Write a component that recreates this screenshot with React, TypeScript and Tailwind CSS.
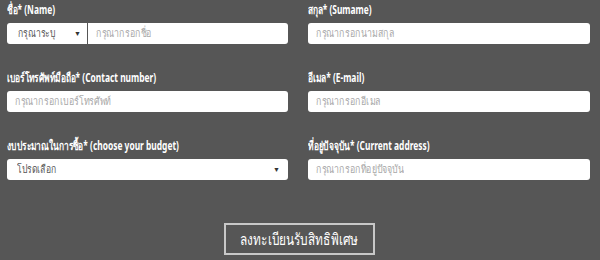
import React from 'react';

const Field = ({ label, children }: { label: string; children: React.ReactNode }) => (
  <div className="flex flex-col">
    <label className="text-[12px] font-bold text-white leading-[16px] mb-[5px] whitespace-nowrap">
      <span className="inline-block origin-left scale-x-[0.7]">{label}</span>
    </label>
    {children}
  </div>
);

const Squeeze = ({ children, scale = 'scale-x-[0.8]' }: { children: React.ReactNode; scale?: string }) => (
  <span className={`inline-block whitespace-nowrap origin-left ${scale}`}>{children}</span>
);

const TextBox = ({ placeholder, className = '' }: { placeholder: string; className?: string }) => (
  <div className={`h-[21px] bg-white flex items-center pl-[8px] text-[11px] text-[#a8a8a8] overflow-hidden ${className}`}>
    <Squeeze>{placeholder}</Squeeze>
  </div>
);

const Caret = () => <span className="text-[7px] text-[#333] leading-none">▼</span>;

const App = () => {
  return (
    <div
      className="w-[600px] h-[260px] bg-[#565656] overflow-hidden"
      style={{ fontFamily: '"Noto Sans", "Liberation Sans", sans-serif' }}
    >
      <div className="grid grid-cols-[281px_282px] gap-x-[20px] gap-y-[26px] pl-[7px] pt-[2px]">
        {/* Name */}
        <Field label="ชื่อ* (Name)">
          <div className="flex gap-[1px]">
            <div className="w-[80px] h-[21px] bg-white rounded-l-[3px] flex items-center justify-between pl-[11px] pr-[6px] text-[11px] text-[#555]">
              <Squeeze scale="scale-x-[0.78]">กรุณาระบุ</Squeeze>
              <Caret />
            </div>
            <TextBox placeholder="กรุณากรอกชื่อ" className="flex-1 rounded-r-[3px]" />
          </div>
        </Field>

        {/* Surname */}
        <Field label="สกุล* (Sumame)">
          <TextBox placeholder="กรุณากรอกนามสกุล" className="rounded-[3px]" />
        </Field>

        {/* Contact number */}
        <Field label="เบอร์โทรศัพท์มือถือ* (Contact number)">
          <TextBox placeholder="กรุณากรอกเบอร์โทรศัพท์" className="rounded-[3px]" />
        </Field>

        {/* E-mail */}
        <Field label="อีเมล* (E-mail)">
          <TextBox placeholder="กรุณากรอกอีเมล" className="rounded-[3px]" />
        </Field>

        {/* Budget */}
        <Field label="งบประมาณในการซื้อ* (choose your budget)">
          <div className="h-[21px] bg-white rounded-[3px] flex items-center justify-between pl-[10px] pr-[8px] text-[11px] text-[#555]">
            <Squeeze scale="scale-x-[0.78]">โปรดเลือก</Squeeze>
            <Caret />
          </div>
        </Field>

        {/* Address */}
        <Field label="ที่อยู่ปัจจุบัน* (Current address)">
          <TextBox placeholder="กรุณากรอกที่อยู่ปัจจุบัน" className="rounded-[3px]" />
        </Field>
      </div>

      {/* Submit */}
      <div className="flex justify-center mt-[43px] pr-[2px]">
        <button className="w-[151px] h-[32px] border-2 border-[#c8c8c8] text-white text-[16px] flex items-center justify-center whitespace-nowrap overflow-hidden">
          <span className="inline-block scale-x-[0.74]">ลงทะเบียนรับสิทธิพิเศษ</span>
        </button>
      </div>
    </div>
  );
};

export default App;
